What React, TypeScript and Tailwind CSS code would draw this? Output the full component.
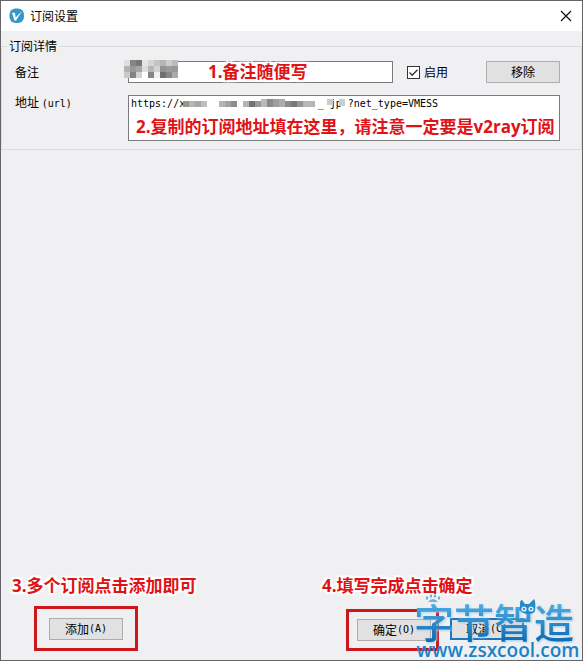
import { useState } from "react";
import type { ReactNode } from "react";

const note =
  "font-['Open_Sans','Noto_Sans_CJK_SC',sans-serif] text-[17px] leading-6 font-bold whitespace-nowrap text-[#e01216] [text-shadow:0_0_2px_#fff,0_0_2px_#fff,0_0_3px_#fff,0_0_4px_#fff,2px_2px_1px_#fff,-2px_-2px_1px_#fff,2px_-2px_1px_#fff,-2px_2px_1px_#fff]";

const mono = "font-['DejaVu_Sans_Mono','Noto_Sans_CJK_SC',monospace] text-[10px]";

function Key({ children }: { children: ReactNode }) {
  return <span className={mono}>{children}</span>;
}

function Button({ children, primary = false }: { children: ReactNode; primary?: boolean }) {
  return (
    <button
      type="button"
      className={`flex h-[22px] w-[74px] shrink-0 items-center justify-center bg-[#e1e1e1] whitespace-nowrap ${
        primary ? "border-2 border-[#1878bf]" : "border border-[#adadad]"
      }`}
    >
      {children}
    </button>
  );
}

const nameTones = [
  ["#dedede", "#858585", "#777777", "#e5e5e5", "#d5d5d5", "#c4c4c4", "#b5b5b5", "#cccccc", "#bcbcbc"],
  ["#b3b3b3", "#999999", "#a6a6a6", "#dddddd", "#b7b7b7", "#d3d3d3", "#929292", "#9b9b9b", "#999999"],
  ["#c9c9c9", "#838383", "#d2d2d2", "#ffffff", "#858585", "#f0f0f0", "#707070", "#888888", "#aaaaaa"],
];

const urlTones = [
  { x: 0, c: "#969696" }, { x: 6, c: "#b4b4b4" }, { x: 12, c: "#a5a5a5" }, { x: 18, c: "#bebebe" },
  { x: 36, c: "#b5b5b5" }, { x: 42, c: "#a3a3a3" }, { x: 48, c: "#8c8c8c" }, { x: 60, c: "#b2b2b2" },
  { x: 66, c: "#737373" }, { x: 72, c: "#999999" }, { x: 78, c: "#b9b9b9" }, { x: 84, c: "#8a8a8a" },
  { x: 90, c: "#9f9f9f" }, { x: 96, c: "#acacac" }, { x: 102, c: "#8b8b8b" }, { x: 108, c: "#777777" },
  { x: 114, c: "#969696" }, { x: 120, c: "#b8b8b8" }, { x: 126, c: "#b5b5b5" },
];

function Watermark() {
  return (
    <div className="pointer-events-none absolute right-0 bottom-0 flex flex-col items-center text-[#1983c9]">
      <svg viewBox="0 0 168 20" className="absolute -top-1 left-0 z-10 h-5 w-[168px]" fill="none" aria-hidden="true">
        <g fill="#63b5e5">
          <ellipse cx="13" cy="4" rx="1.2" ry="1.8" />
          <ellipse cx="17" cy="2" rx="1.2" ry="1.8" />
          <ellipse cx="21" cy="2" rx="1.2" ry="1.8" />
          <ellipse cx="25" cy="4" rx="1.2" ry="1.8" />
          <path d="M14 8q5-6 10 0z" />
        </g>
        <path d="M106 10q0-4 2-4l3 4h4l5-5q2 2 1 12-1 3-7 3t-8-4z" fill="#2289cb" />
        <circle cx="110" cy="15" r="2.6" fill="#d9effb" />
        <circle cx="117" cy="15" r="2.6" fill="#d9effb" />
        <circle cx="110" cy="15" r="1" fill="#176aa7" />
        <circle cx="117" cy="15" r="1" fill="#176aa7" />
      </svg>
      <span className="-mb-1 flex w-[168px] justify-between bg-linear-to-b from-[#54b5ea] to-[#0867af] bg-clip-text font-['Noto_Sans_CJK_SC',sans-serif] text-[40px] leading-[46px] font-medium text-transparent drop-shadow-[1px_1px_1px_#9ccfeb]">
        字节智造
      </span>
      <span className="font-['Open_Sans',sans-serif] text-[19px] leading-5 font-semibold">www.zsxcool.com</span>
    </div>
  );
}

export default function App() {
  const [enabled, setEnabled] = useState(true);
  const [name, setName] = useState("");
  const [url, setUrl] = useState(
    "https://x" + "\u00a0".repeat(22) + "_\u00a0jp\u00a0?net_type=VMESS",
  );

  return (
    <main className="relative flex min-h-screen flex-col overflow-hidden border border-[#66666a] bg-[#f0eff1] font-['Noto_Sans_CJK_SC',sans-serif] text-xs leading-4 text-black">
      <header className="flex h-[30px] items-center bg-white px-2">
        <svg viewBox="0 0 16 16" className="h-4 w-4" aria-hidden="true">
          <rect x="0.5" y="0.5" width="14.5" height="14.5" rx="6" fill="#3796c8" />
          <path d="M3 4.500l3 .5.6 4.500L13 3 7 12.500H5.400z" fill="#fff" />
        </svg>
        <h1 className="ml-[5px]">订阅设置</h1>
        <button type="button" aria-label="关闭" className="ml-auto flex h-5 w-4 items-center justify-center">
          <svg viewBox="0 0 12 12" className="h-3 w-3" fill="none" stroke="#111" strokeWidth="1.2" aria-hidden="true">
            <path d="M1 1l10 10M11 1L1 11" />
          </svg>
        </button>
      </header>

      <fieldset className="mt-[7px] border border-[#dcdcdf] pr-[21px] pb-2 pl-[13px]">
        <legend className="-ml-2 px-[2px]">订阅详情</legend>
        <div className="mt-[7px] flex items-center">
          <label htmlFor="name" className="w-[113px] shrink-0">备注</label>
          <div className="relative min-w-0 flex-1">
            <input
              id="name"
              value={name}
              onChange={(e) => setName(e.target.value)}
              className="block h-[22px] w-full border border-[#7a7a7a] bg-white px-1"
            />
            <div className="absolute -top-px -left-1 grid grid-cols-9 bg-white" aria-hidden="true">
              {nameTones.flat().map((tone, i) => (
                <span key={i} className="h-[6px] w-[6px]" style={{ backgroundColor: tone }} />
              ))}
            </div>
            <span className={`absolute -top-px left-20 ${note}`}>1.备注随便写</span>
          </div>
          <label className="ml-[14px] flex shrink-0 items-center gap-1">
            <span className="relative flex">
              <input
                type="checkbox"
                checked={enabled}
                onChange={(e) => setEnabled(e.target.checked)}
                className="h-[13px] w-[13px] appearance-none border border-[#333] bg-white"
              />
              {enabled && (
                <svg viewBox="0 0 13 13" className="pointer-events-none absolute inset-0" fill="none" stroke="#333" strokeWidth="1.3" aria-hidden="true">
                  <path d="M2.5 6.5l2.7 2.7 5.3-5.5" />
                </svg>
              )}
            </span>
            启用
          </label>
          <div className="ml-[38px]">
            <Button>移除</Button>
          </div>
        </div>
        <div className="mt-3 flex">
          <label htmlFor="url" className="-mt-px w-[113px] shrink-0">
            地址 <Key>(url)</Key>
          </label>
          <div className="relative min-w-0 flex-1">
            <textarea
              id="url"
              value={url}
              onChange={(e) => setUrl(e.target.value)}
              className={`block h-[46px] w-full resize-none overflow-hidden border border-[#7a7a7a] bg-white px-[2px] leading-4 ${mono}`}
            />
            <svg viewBox="0 0 164 10" className="absolute top-1 left-[55px] h-[10px] w-[164px]" aria-hidden="true">
              {urlTones.map(({ x, c }, i) => (
                <rect key={x} x={x} y={i > 9 && i < 14 ? 0 : 2} width="6" height={i > 9 && i < 14 ? 8 : 6} fill={c} />
              ))}
              <path d="M144 0h6v6h-6zM156 0h6v7h-6z" fill="#ccc" />
            </svg>
            <span className={`absolute top-5 left-2 ${note}`}>
              2.复制的订阅地址填在这里，请注意一定要是v2ray订阅
            </span>
          </div>
        </div>
      </fieldset>

      <footer className="mt-auto flex justify-between pr-[58px] pb-[9px] pl-[11px]">
        <div>
          <p className={note}>3.多个订阅点击添加即可</p>
          <div className="mt-2 ml-[22px] flex h-[45px] w-[104px] items-center justify-center border-[3px] border-[#cc171b]">
            <Button>
              添加<Key>(A)</Key>
            </Button>
          </div>
        </div>
        <div>
          <p className={note}>4.填写完成点击确定</p>
          <div className="mt-2 ml-6 flex items-center">
            <div className="mt-[3px] flex h-[42px] w-[93px] items-center border-[3px] border-[#cc171b] pl-2">
              <Button>
                确定<Key>(O)</Key>
              </Button>
            </div>
            <div className="ml-[11px]">
              <Button primary>
                取消<Key>(C)</Key>
              </Button>
            </div>
          </div>
        </div>
      </footer>
      <Watermark />
    </main>
  );
}
